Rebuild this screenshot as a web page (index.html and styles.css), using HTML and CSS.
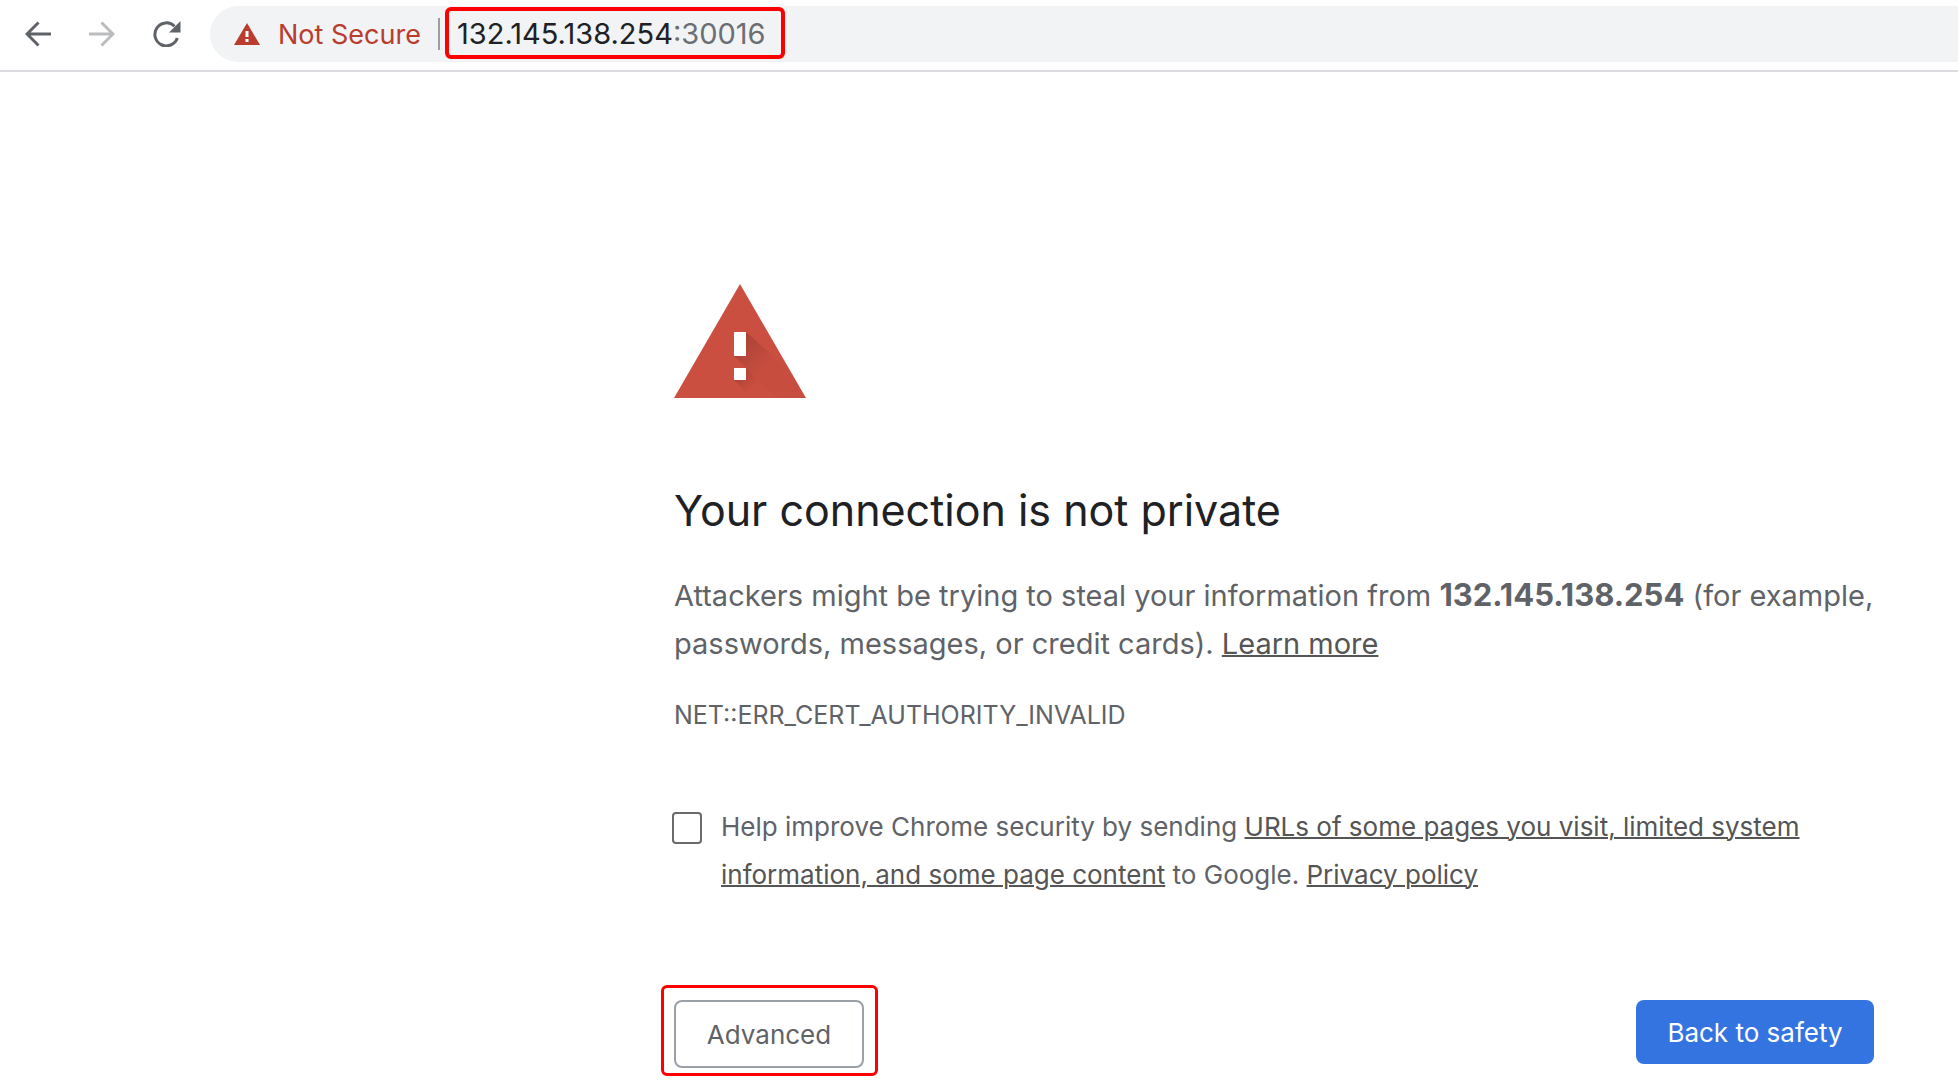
FILE: index.html
```html
<!DOCTYPE html>
<html lang="en">
<head>
<meta charset="utf-8">
<meta name="viewport" content="width=device-width, initial-scale=1">
<title>Privacy error</title>
<link rel="stylesheet" href="styles.css">
</head>
<body>
<header class="toolbar">
  <nav class="nav" aria-label="Browser navigation">
    <button class="nav-button" type="button" aria-label="Back">
      <svg width="26" height="26" viewBox="0 0 26 26" fill="none" stroke="currentColor" stroke-width="3"><path d="M26 13H2M13.500 1.500 2 13l11.500 11.500"/></svg>
    </button>
    <button class="nav-button" type="button" aria-label="Forward" disabled>
      <svg width="26" height="26" viewBox="0 0 26 26" fill="none" stroke="currentColor" stroke-width="3"><path d="M0 13h24M12.500 1.500 24 13 12.500 24.500"/></svg>
    </button>
    <button class="nav-button" type="button" aria-label="Reload">
      <svg width="28" height="26" viewBox="0 0 28 26"><path d="M24.300 17A11.500 11.500 0 1 1 21.500 5.200" fill="none" stroke="currentColor" stroke-width="3"/><path d="M27.500 0v11.500H16z" fill="currentColor"/></svg>
    </button>
  </nav>
  <div class="omnibox">
    <div class="security">
      <svg width="26" height="22" viewBox="0 0 26 22"><path d="M13 0l13 22H0z" fill="currentColor"/><path d="M11.500 8h3v6h-3zM11.500 16h3v3h-3z" fill="#fff"/></svg>
      <span>Not Secure</span>
    </div>
    <div class="address highlight"><span>132.145.138.254</span><span class="port">:30016</span></div>
  </div>
</header>
<main class="interstitial">
  <svg class="warning" width="132" height="114" viewBox="0 0 132 114" role="img" aria-label="Warning">
    <defs>
      <linearGradient id="shade" gradientUnits="userSpaceOnUse" x1="64" y1="58" x2="90" y2="84">
        <stop offset="0" stop-color="#000" stop-opacity=".16"/>
        <stop offset="1" stop-color="#000" stop-opacity=".02"/>
      </linearGradient>
      <linearGradient id="shade-dot" gradientUnits="userSpaceOnUse" x1="64" y1="88" x2="80" y2="104">
        <stop offset="0" stop-color="#000" stop-opacity=".16"/>
        <stop offset="1" stop-color="#000" stop-opacity="0"/>
      </linearGradient>
    </defs>
    <path d="M66 0l66 114H0z" fill="#cb4f40"/>
    <path d="M72 48l43 38 17 28H102L60 72z" fill="url(#shade)"/>
    <path d="M72 84l30 30H78L60 96z" fill="url(#shade-dot)"/>
    <path d="M60 48h12v24H60zM60 84h12v12H60z" fill="#fff"/>
  </svg>
  <h1>Your connection is not private</h1>
  <p class="message">Attackers might be trying to steal your information from <strong>132.145.138.254</strong> (for example, passwords, messages, or credit cards). <a href="#learn">Learn more</a></p>
  <p class="error-code">NET::ERR_CERT_AUTHORITY_INVALID</p>
  <div class="opt-in">
    <input type="checkbox" id="opt-in">
    <label for="opt-in">Help improve Chrome security by sending <a href="#urls">URLs of some pages you visit, limited system information, and some page content</a> to Google. <a href="#privacy">Privacy policy</a></label>
  </div>
  <div class="actions">
    <div class="highlight advanced"><button class="secondary" type="button">Advanced</button></div>
    <button class="primary" type="button">Back to safety</button>
  </div>
</main>
</body>
</html>
```
FILE: styles.css
```css
* {
  box-sizing: border-box;
}

body {
  margin: 0;
  background: #fff;
  color: #5f6368;
  font-family: Inter, "Liberation Sans", sans-serif;
}

button {
  font: inherit;
}

svg {
  display: block;
}

.toolbar {
  display: flex;
  align-items: center;
  height: 72px;
  padding: 0 0 2px 25px;
  border-bottom: 2px solid #dadce0;
}

.nav {
  display: flex;
  align-items: center;
  gap: 38px;
  width: 185px;
}

.nav-button {
  padding: 0;
  border: 0;
  background: none;
  color: #5f6368;
}

.nav-button:disabled {
  color: #babcbe;
}

.omnibox {
  display: flex;
  flex: 1;
  align-items: center;
  height: 56px;
  padding-left: 24px;
  border-radius: 28px 0 0 28px;
  background: #f1f3f4;
  font-size: 27px;
}

.security {
  display: flex;
  align-items: center;
  gap: 18px;
  width: 206px;
  height: 32px;
  border-right: 2px solid #9e9e9e;
  color: #b93c2e;
  white-space: nowrap;
}

.highlight {
  border: 4px solid #f00;
  border-radius: 6px;
}

.address {
  display: flex;
  align-items: center;
  align-self: flex-start;
  width: 340px;
  height: 52px;
  margin: 1px 0 0 5px;
  padding-left: 8px;
  color: #202124;
  font-size: 29px;
}

.port {
  color: #6b6e72;
}

.interstitial {
  max-width: 1284px;
  margin-left: auto;
  padding: 212px 84px 8px 0;
}

h1 {
  margin: 82px 0 0;
  color: #202124;
  font-size: 43px;
  font-weight: 400;
  line-height: 60px;
}

.message {
  margin: 32px 0 0;
  font-size: 29px;
  line-height: 48px;
}

.message strong {
  font-size: 31px;
  line-height: 1;
}

.error-code {
  margin: 25px 0 0;
  font-size: 25px;
  line-height: 44px;
}

.opt-in {
  display: flex;
  gap: 19px;
  margin: 66px 0 0 -2px;
  font-size: 26px;
  line-height: 48px;
}

.opt-in input {
  flex: none;
  width: 30px;
  height: 32px;
  margin: 9px 0 0;
  border: 2px solid #6b6b6b;
  border-radius: 4px;
  background: #fff;
  appearance: none;
}

a {
  color: #555;
  text-decoration: underline;
  text-decoration-thickness: 2px;
}

.actions {
  display: flex;
  align-items: flex-start;
  justify-content: space-between;
  margin-top: 86px;
  font-size: 26px;
}

.advanced {
  margin-left: -13px;
  padding: 12px 11px 5px 10px;
  border-width: 3px;
}

.secondary {
  display: block;
  width: 190px;
  height: 68px;
  border: 2px solid #9aa0a6;
  border-radius: 8px;
  background: #fff;
  color: #5f6368;
}

.primary {
  width: 238px;
  height: 64px;
  margin-top: 15px;
  padding: 0;
  border: 0;
  border-radius: 8px;
  background: #3374e0;
  color: #fff;
}
```
